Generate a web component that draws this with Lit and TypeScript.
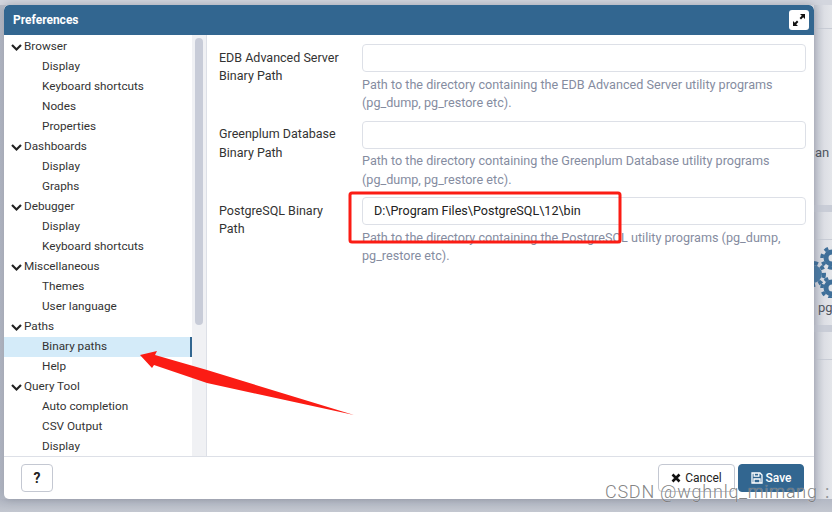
import { LitElement, html, css, svg } from "lit";
import { customElement } from "lit/decorators.js";

type Row = { t: string; top?: boolean; sel?: boolean };
const rows: Row[] = [
  { t: "Browser", top: true }, { t: "Display" }, { t: "Keyboard shortcuts" }, { t: "Nodes" }, { t: "Properties" },
  { t: "Dashboards", top: true }, { t: "Display" }, { t: "Graphs" },
  { t: "Debugger", top: true }, { t: "Display" }, { t: "Keyboard shortcuts" },
  { t: "Miscellaneous", top: true }, { t: "Themes" }, { t: "User language" },
  { t: "Paths", top: true }, { t: "Binary paths", sel: true }, { t: "Help" },
  { t: "Query Tool", top: true }, { t: "Auto completion" }, { t: "CSV Output" }, { t: "Display" },
];

const fields = [
  { label: "EDB Advanced Server Binary Path", value: "", help: "Path to the directory containing the EDB Advanced Server utility programs (pg_dump, pg_restore etc)." },
  { label: "Greenplum Database Binary Path", value: "", help: "Path to the directory containing the Greenplum Database utility programs (pg_dump, pg_restore etc)." },
  { label: "PostgreSQL Binary Path", value: "D:\\Program Files\\PostgreSQL\\12\\bin", help: "Path to the directory containing the PostgreSQL utility programs (pg_dump, pg_restore etc)." },
];

@customElement("app-root")
export class AppRoot extends LitElement {
  static styles = css`
    :host { display: block; width: 832px; height: 512px; position: relative; overflow: hidden;
      font-family: Roboto, "Liberation Sans", sans-serif; font-size: 12px; color: #222;
      background: linear-gradient(90deg, #b4bac6 0, #cdd1da 14px, #e0e2e8 100%); }
    .topstrip { position: absolute; left: 0; right: 0; top: 0; height: 5px; background: #d3d6de; }
    .bottomshade { position: absolute; left: 0; right: 0; bottom: 0; height: 13px;
      background: linear-gradient(180deg, #b3b8c4, #c3c7d0); }
    .bg { position: absolute; left: 814px; right: 0; top: 0; bottom: 0;
      background: linear-gradient(90deg, #c4c8d2, #dcdee4 10px, #e4e6ea); }
    .bg-line { position: absolute; left: 0; right: 0; height: 1px; background: #c8ccd5; }
    .bg-band { position: absolute; left: 0; right: 0; height: 7px; background: #c9cdd7; }
    .bg-text { position: absolute; font-size: 13px; line-height: 16px; color: #4f5560; white-space: nowrap; }
    .gear { position: absolute; left: 0; top: 246px; }

    .dialog { position: absolute; left: 4px; top: 5px; width: 810px; height: 494px; box-sizing: border-box;
      background: #fff; border-radius: 5px; display: flex; flex-direction: column; overflow: hidden;
      box-shadow: 0 0 10px rgba(70,75,90,.35); }
    .head { flex: 0 0 30px; background: #326690; display: flex; align-items: center; justify-content: space-between;
      padding: 0 5px 0 9px; color: #fff; font-size: 12px; font-weight: 700; border-radius: 5px 5px 0 0; }
    .expand { width: 20px; height: 20px; background: #fff; border-radius: 3px; display: flex; align-items: center; justify-content: center; }
    .body { flex: 1; min-height: 0; display: flex; }
    .tree { flex: 0 0 202px; display: flex; border-right: 1px solid #dde0e7; box-sizing: content-box; overflow: hidden; }
    .rows { flex: 0 0 188px; padding-top: 2px; box-sizing: border-box; overflow: hidden; font-size: 11.75px; }
    .row { height: 20px; line-height: 20px; white-space: nowrap; display: flex; align-items: center; color: #333; box-sizing: border-box; }
    .row span { margin-bottom: 2px; }
    .row.top { padding-left: 7px; }
    .row.top svg { margin-right: 2px; }
    .row.sub { padding-left: 38px; }
    .row.sel { background: #d4ebf9; border-right: 2px solid #326690; }
    .track { flex: 1; background: #f0f1f4; position: relative; display: flex; justify-content: center; padding-top: 3px; box-sizing: border-box; }
    .thumb { width: 8px; height: 287px; background: #c8ccd8; border-radius: 4px; }
    .form { flex: 1; padding: 9px 8px 0 12px; display: flex; flex-direction: column; gap: 6px; font-size: 12.5px; }
    .field { display: grid; grid-template-columns: 143px 1fr; height: 70.5px; }
    .field label { line-height: 18.5px; color: #333; padding: 4.5px 18px 0 0; }
    .input { height: 28px; box-sizing: border-box; border: 1px solid #dde0e7; border-radius: 4px; background: #fff;
      padding: 0 11px; line-height: 26px; color: #222; font-size: 12.55px; }
    .help { margin-top: 3.5px; color: #858c9f; line-height: 18.5px; font-size: 12.62px; }
    .foot { flex: 0 0 43px; border-top: 1px solid #dde0e7; display: flex; align-items: flex-start; justify-content: space-between;
      padding: 7px 10px 0 17px; box-sizing: border-box; }
    .btn { height: 28px; box-sizing: border-box; border-radius: 4px; display: inline-flex; align-items: center; justify-content: center; font: inherit; padding: 0; }
    .help-btn { width: 32px; background: #fff; border: 1px solid #c4c8d2; font-weight: 700; font-size: 14px; color: #222; }
    .actions { display: flex; gap: 3px; }
    .cancel { width: 77px; background: #fff; border: 1px solid #c4c8d2; color: #222; gap: 4px; }
    .save { width: 66px; background: #326690; border: 1px solid #326690; color: #fff; font-weight: 500; gap: 3px; }

    .overlay { position: absolute; left: 0; top: 0; pointer-events: none; }
    .mark { position: absolute; left: 605px; top: 481px; font-size: 18px; line-height: 22px; font-weight: 300; color: rgba(100,100,100,.8); white-space: nowrap;
      letter-spacing: .75px; text-shadow: 0 0 1px rgba(255,255,255,.7); }
    .mark2 { position: absolute; left: 825px; top: 481px; font-size: 18px; line-height: 22px; color: rgba(90,90,90,.6); }
  `;

  private chevron() {
    return html`<svg width="11" height="9" viewBox="0 0 11 9"><path d="M1 2 L5.5 6.5 L10 2" fill="none" stroke="#222" stroke-width="2.2"/></svg>`;
  }

  render() {
    return html`
      <div class="bg">
        <div class="bg-band" style="top:205px"></div>
        <div class="bg-line" style="top:28px"></div>
        <div class="bg-line" style="top:239px"></div>
        <div class="bg-band" style="top:325px"></div>
        <div class="bg-line" style="top:359px"></div>
        <div class="bg-text" style="left:1px;top:145px">an</div>
        <div class="bg-text" style="left:4px;top:300px">pg</div>
        <svg class="gear" width="18" height="52" viewBox="0 0 18 52" fill="none" stroke="#3f6f99">
          ${svg`
            <circle cx="-1" cy="28" r="9" fill="#4a7aa3" stroke="none"/>
            <circle cx="-1" cy="28" r="11" stroke-width="4" stroke-dasharray="4 3.5"/>
            <circle cx="18" cy="12" r="6" stroke-width="5"/>
            <circle cx="18" cy="12" r="10" stroke-width="3.5" stroke-dasharray="4 3.8"/>
            <circle cx="18" cy="42" r="6" stroke-width="5"/>
            <circle cx="18" cy="42" r="10" stroke-width="3.5" stroke-dasharray="4 3.8"/>`}
        </svg>
      </div>
      <div class="topstrip"></div>
      <div class="bottomshade"></div>
      <div class="dialog">
        <div class="head">
          <span>Preferences</span>
          <div class="expand">
            <svg width="14" height="14" viewBox="0 0 14 14" fill="#111">
              <path d="M8 1h5v5l-1.8-1.8L9 6.4 7.6 5 9.8 2.8zM6 13H1V8l1.8 1.8L5 7.6 6.4 9 4.2 11.2z"/>
            </svg>
          </div>
        </div>
        <div class="body">
          <div class="tree">
            <div class="rows">
              ${rows.map(r => html`<div class="row ${r.top ? "top" : "sub"} ${r.sel ? "sel" : ""}">${r.top ? this.chevron() : ""}<span>${r.t}</span></div>`)}
            </div>
            <div class="track"><div class="thumb"></div></div>
          </div>
          <div class="form">
            ${fields.map(f => html`
              <div class="field">
                <label>${f.label}</label>
                <div>
                  <div class="input">${f.value}</div>
                  <div class="help">${f.help}</div>
                </div>
              </div>`)}
          </div>
        </div>
        <div class="foot">
          <button class="btn help-btn">?</button>
          <div class="actions">
            <button class="btn cancel">
              <svg width="10" height="10" viewBox="0 0 10 10"><path d="M1.5 1.5l7 7M8.5 1.5l-7 7" stroke="#111" stroke-width="2.6"/></svg>
              Cancel
            </button>
            <button class="btn save">
              <svg width="12" height="12" viewBox="0 0 12 12" fill="none" stroke="#fff" stroke-width="1.3"><path d="M1 1h8l2 2v8H1z"/><path d="M3.2 1.2v3h4.6v-3M3 11V7h6v4"/></svg>
              Save
            </button>
          </div>
        </div>
      </div>
      <svg class="overlay" width="832" height="512" viewBox="0 0 832 512">
        <rect x="350" y="193" width="270" height="49" rx="2" fill="none" stroke="#fb1c14" stroke-width="3"/>
        <path d="M140 355 L157 351 L155 355 L207 370 L354 415 L207 383 L154 365 L152 368 Z" fill="#fb1c14"/>
      </svg>
      <div class="mark">CSDN @wghnlq_mimang</div>
      <div class="mark2">:</div>
    `;
  }
}
